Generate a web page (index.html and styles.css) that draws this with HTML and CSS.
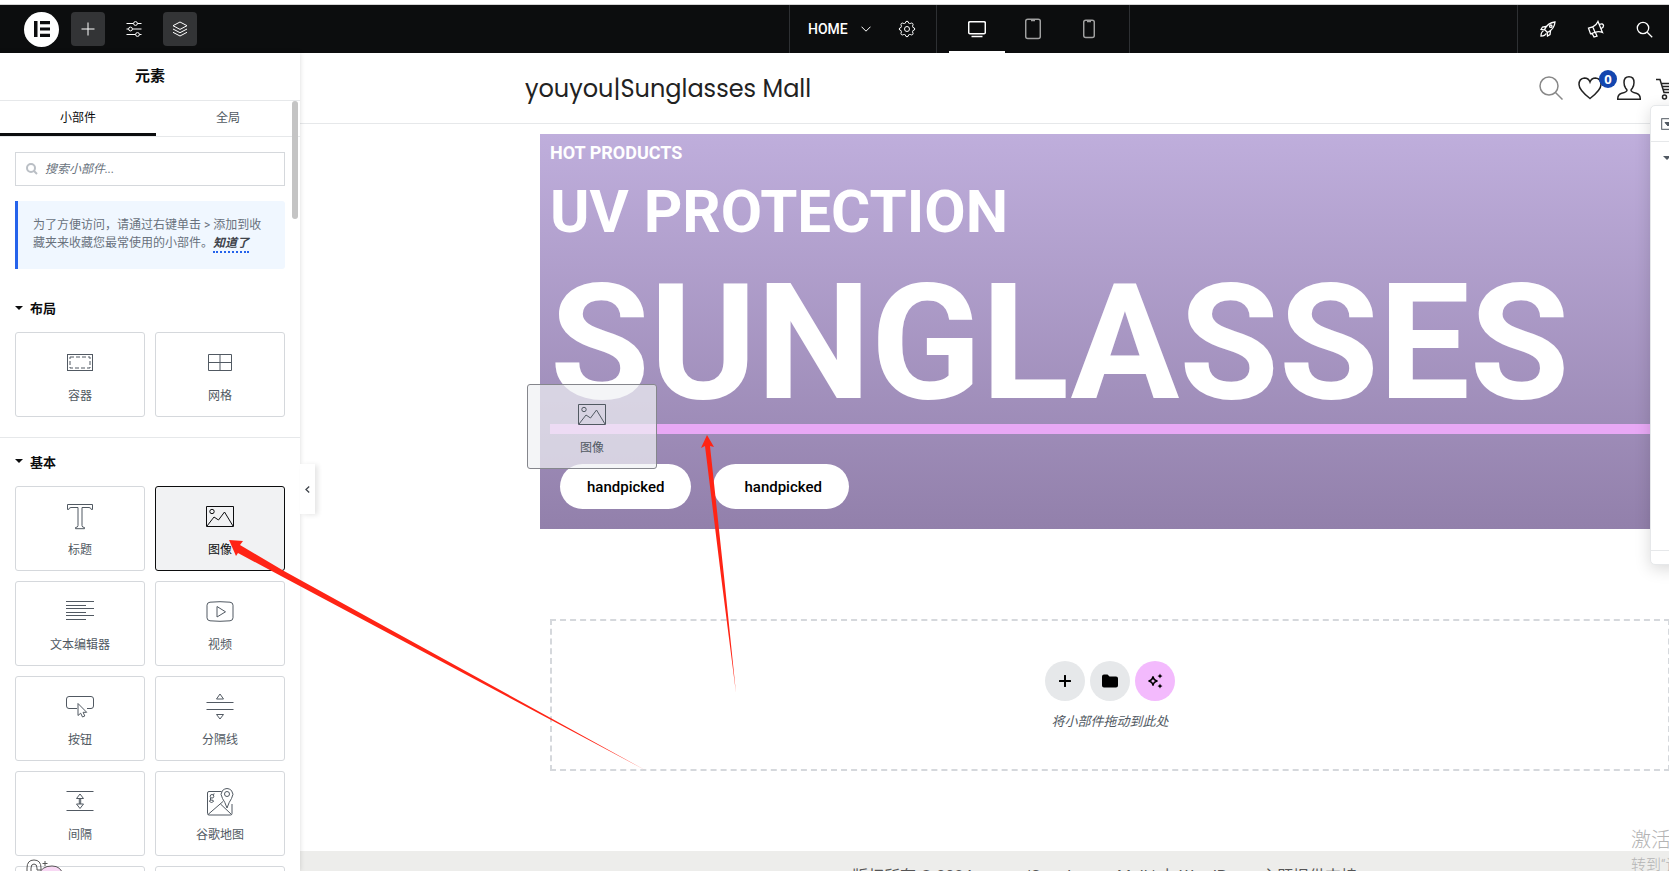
FILE: index.html
```html
<!DOCTYPE html>
<html lang="zh-CN">
<head>
  <meta charset="UTF-8" />
  <meta name="viewport" content="width=device-width, initial-scale=1.0" />
  <title>Elementor | HOME</title>
  <link rel="stylesheet" href="styles.css">
</head>
<body>
  <header class="topbar">
    <div class="bar-left">
      <button class="logo" aria-label="Elementor">
        <svg width="16" height="16" viewBox="0 0 16 16" fill="#0c0d0e"><path d="M0 0h3.500v16H0zM6 0h10v3.200H6zM6 6.400h10v3.200H6zM6 12.800h10v3.200H6z"/></svg>
      </button>
      <button class="tool on" aria-label="添加元素">
        <svg width="14" height="14" viewBox="0 0 14 14"><path d="M7 .5v13M.5 7h13"/></svg>
      </button>
      <button class="tool" aria-label="网站设置">
        <svg width="16" height="16" viewBox="0 0 16 16"><path d="M.5 2.500h7M11.500 2.500h4M.5 8h2M6.500 8h9M.5 13.500h9M13.500 13.500h2"/><circle cx="9.500" cy="2.500" r="1.900"/><circle cx="4.500" cy="8" r="1.900"/><circle cx="11.500" cy="13.500" r="1.900"/></svg>
      </button>
      <button class="tool on" aria-label="结构">
        <svg width="16" height="16" viewBox="0 0 16 16"><path d="M8 1l7 3.700-7 3.700-7-3.700zM1 8l7 3.700L15 8M1 11.300L8 15l7-3.700"/></svg>
      </button>
    </div>
    <div class="bar-center">
      <div class="doc">
        <button class="doc-name">HOME
          <svg width="10" height="6" viewBox="0 0 10 6"><path d="M.5.7L5 5.200 9.500.7"/></svg>
        </button>
        <button class="settings" aria-label="页面设置">
          <svg width="18" height="18" viewBox="0 0 18 18"><path d="M7.300 3.200Q7.600 1.200 9 1.200t1.700 2q.9.500 1.500.3 1.700-.9 2.500 0t-.1 2.500q0 .9.300 1.400 1.900.3 1.900 1.600t-1.900 1.600q-.4.600-.3 1.400.9 1.600.1 2.500t-2.500 0q-.8-.1-1.500.3-.3 2-1.700 2t-1.700-2q-.7-.5-1.500-.3-1.700.9-2.500 0t.1-2.500q0-.8-.3-1.400-1.900-.4-1.900-1.600t1.900-1.600q.3-.6.300-1.400-.9-1.600-.1-2.500t2.500 0q.8.200 1.500-.3z"/><circle cx="9" cy="9" r="2.500"/></svg>
        </button>
      </div>
      <div class="devices">
        <button class="device on" aria-label="桌面">
          <svg width="18" height="18" viewBox="0 0 18 18"><rect x=".7" y="1.700" width="16.600" height="12" rx="1.200"/><path d="M3.500 16.500h11"/></svg>
        </button>
        <button class="device" aria-label="平板">
          <svg width="16" height="22" viewBox="0 0 16 22"><rect x=".7" y="1.200" width="14.600" height="19.400" rx="2"/><path d="M6 2.500h4"/></svg>
        </button>
        <button class="device" aria-label="手机">
          <svg width="12" height="20" viewBox="0 0 12 20"><rect x=".7" y="1.200" width="10.600" height="17.400" rx="2"/><path d="M4 2.500h4"/></svg>
        </button>
      </div>
    </div>
    <div class="bar-right">
      <div class="actions">
        <button aria-label="新功能">
          <svg width="16" height="16" viewBox="0 0 16 16"><path d="M4.500 8.500Q8 1.500 15 1q-.5 7-7.500 10.500zM6 5.500L2.500 6 1 8.500l3.500.3M10.500 10L10 13.500 7.500 15l-.3-3.500M3.500 10Q1 11 1 15q4 0 5-2.500M4.500 8.500l3 3"/><circle cx="10.800" cy="5.200" r="1.200"/></svg>
        </button>
        <button aria-label="公告">
          <svg width="18" height="18" viewBox="0 0 18 18"><path d="M1.500 8.200L5.800 6.800 8 12.300l-4.500 1.500zM5.800 6.800Q9.500 5 11 1.500L15.500 12.500Q12 11 8 12.300M5 13.300l2 3.700 3-1-1.700-3.700M12.500 4.500q3.500-1.500 4 1 .2 2-2.200 3"/></svg>
        </button>
        <button aria-label="查找">
          <svg width="17" height="17" viewBox="0 0 17 17"><circle cx="7" cy="7" r="5.700"/><path d="M11.200 11.200l5 5"/></svg>
        </button>
      </div>
    </div>
  </header>

  <div class="workspace">
    <aside class="panel">
      <h1 class="panel-title">元素</h1>
      <nav class="tabs">
        <button class="tab active">小部件</button>
        <button class="tab">全局</button>
      </nav>
      <div class="scrollbar"></div>
      <div class="panel-top">
        <label class="search">
          <svg width="12" height="12" viewBox="0 0 12 12"><circle cx="5" cy="5" r="4"/><path d="M8 8l3 3"/></svg>
          <input type="text" placeholder="搜索小部件..." aria-label="搜索小部件">
        </label>
        <div class="notice">为了方便访问，请通过右键单击 &gt; 添加到收藏夹来收藏您最常使用的小部件。<a href="#">知道了</a></div>
      </div>

      <section class="category">
        <button class="cat-title"><i class="caret"></i>布局</button>
        <div class="widgets">
          <button class="widget">
            <svg width="28" height="28" viewBox="0 0 28 28"><rect x="1.500" y="5.500" width="25" height="16"/><rect x="4" y="8" width="20" height="11" stroke-dasharray="4 2"/></svg>
            <span>容器</span>
          </button>
          <button class="widget">
            <svg width="28" height="28" viewBox="0 0 28 28"><path d="M2.500 5.500h23v16h-23zM14 5.500v16M2.500 13.500h23"/></svg>
            <span>网格</span>
          </button>
        </div>
      </section>

      <section class="category">
        <button class="cat-title"><i class="caret"></i>基本</button>
        <div class="widgets">
          <button class="widget">
            <svg width="28" height="28" viewBox="0 0 28 28"><path d="M1.500 1.500h25v5h-1.200q-.3-2-2.300-2h-7v18q0 2 2.500 2v1.200h-9v-1.200q2.500 0 2.500-2v-18H5q-2 0-2.300 2H1.500z"/></svg>
            <span>标题</span>
          </button>
          <button class="widget selected">
            <svg width="28" height="28" viewBox="0 0 28 28"><path d="M.5 3.500h27v20H.5zM1 23l7-9 4.500 3L18.500 9l8.500 14"/><circle cx="6" cy="8.500" r="2.200"/></svg>
            <span>图像</span>
          </button>
          <button class="widget">
            <svg width="28" height="28" viewBox="0 0 28 28"><path d="M0 3.500h28M0 7.500h20M0 10.500h28M0 14.500h20M0 17.500h28M0 21.500h20"/></svg>
            <span>文本编辑器</span>
          </button>
          <button class="widget">
            <svg width="28" height="28" viewBox="0 0 28 28"><path d="M4 4.200q10-1 20 0 3 .3 3 3v12.600q0 2.700-3 3-10 1-20 0-3-.3-3-3V7.200q0-2.700 3-3zM11 8.500v10.500l8.500-5.200z"/></svg>
            <span>视频</span>
          </button>
          <button class="widget">
            <svg width="28" height="28" viewBox="0 0 28 28"><path d="M11 15.500H3q-2.500 0-2.500-2.500V6Q.5 3.500 3 3.500h22q2.500 0 2.500 2.500v7q0 2.500-2.500 2.500h-4"/><path d="M12 10.500v12l2.700-2.300 1.800 3.800 2.300-1-1.700-3.700h3.600z"/></svg>
            <span>按钮</span>
          </button>
          <button class="widget">
            <svg width="28" height="28" viewBox="0 0 28 28"><path d="M.5 9.500h27M.5 16.500h27M14 1l3.500 5h-7zM14 26l3.500-4.500h-7z"/></svg>
            <span>分隔线</span>
          </button>
          <button class="widget">
            <svg width="28" height="28" viewBox="0 0 28 28"><path d="M.5 3.500h27M.5 22.500h27M14 6l3.500 4.500h-7zM14 20.500l3.500-4.500h-7zM13.300 10.500V16M14.700 10.500V16"/></svg>
            <span>间隔</span>
          </button>
          <button class="widget">
            <svg width="28" height="28" viewBox="0 0 28 28"><path d="M15.500 3.500H3Q1.500 3.500 1.500 5v20.500q0 1.500 1.500 1.500h21.500q1.500 0 1.500-1.500V16M2 26.500L17 13.500M14.500 16l11 10.500M21 20Q19 14 16.500 10.500q-3-4.500 0-8 4.500-4 9 0 3 3.500 0 8Q23 14 21 20z"/><circle cx="21" cy="6" r="2.500"/><circle cx="6" cy="8.300" r="1.800"/><path d="M7 6.500l1.500-.7M5 10q-2 1 0 2 3 0 2.500 1.500-2 2-4 0-.5-1 1.500-1.500"/></svg>
            <span>谷歌地图</span>
          </button>
          <button class="widget" aria-label="图像框"></button>
          <button class="widget" aria-label="图标"></button>
        </div>
      </section>
      <button class="collapse" aria-label="收起面板">
        <svg width="5" height="7" viewBox="0 0 5 7"><path d="M4.200.5L1 3.500l3.200 3"/></svg>
      </button>
      <svg class="mascot" width="44" height="16" viewBox="0 0 44 16"><path class="blob" d="M14 16q2-9 13-9 9 0 11 9z"/><path d="M2 16V9q0-8 7-8t7 8v2h-4V9q0-4-3-4T6 9v7M20 2v5M17.500 4.500h5"/></svg>
    </aside>

    <main class="canvas">
      <div class="site-header">
        <a class="site-title" href="#">youyou|Sunglasses Mall</a>
        <div class="site-icons">
          <a href="#" class="s-search" aria-label="搜索"><svg width="24" height="24" viewBox="0 0 24 24"><circle cx="10" cy="10" r="9"/><path d="M16.500 16.500l7 7"/></svg></a>
          <a href="#" class="s-heart" aria-label="收藏"><svg width="24" height="24" viewBox="0 0 24 24"><path d="M12 22.500Q1 14 1 8.500 1 2.500 6.500 2 10.500 2 12 6q1.500-4 5.500-4 5.500.5 5.500 6.500 0 5.500-11 14z"/></svg><b class="badge">0</b></a>
          <a href="#" aria-label="账户"><svg width="24" height="24" viewBox="0 0 24 24"><path d="M.7 23.300q0-5 4-6 5.300-1.300 5.300-3 0-1-1.300-2Q7 10 7 6.500 7 .8 12 .8t5 5.700q0 3.500-1.700 5.800-1.300 1-1.300 2 0 1.700 5.300 3 4 1 4 6z"/></svg></a>
          <a href="#" class="s-cart" aria-label="购物车"><svg width="24" height="24" viewBox="0 0 24 24"><path d="M0 3.500h4l4 13h14M5 7.500h18l-2 6H7M5.500 10.500H22"/><circle cx="8.500" cy="21" r="2"/><circle cx="19.500" cy="21" r="2"/></svg></a>
        </div>
      </div>

      <section class="hero">
        <h4>HOT PRODUCTS</h4>
        <h2>UV PROTECTION</h2>
        <h1>SUNGLASSES</h1>
        <div class="drop-line"></div>
        <div class="hero-buttons">
          <button class="pill">handpicked</button>
          <button class="pill wide">handpicked</button>
        </div>
        <div class="ghost">
          <svg width="28" height="28" viewBox="0 0 28 28"><path d="M.5 3.500h27v20H.5zM1 23l7-9 4.500 3L18.500 9l8.500 14"/><circle cx="6" cy="8.500" r="2.200"/></svg>
          <span>图像</span>
        </div>
      </section>

      <section class="add-section">
        <div class="add-buttons">
          <button aria-label="添加新容器"><svg width="12" height="12" viewBox="0 0 12 12"><path d="M6 .8v10.400M.8 6h10.400" stroke="#000" stroke-width="2" stroke-linecap="round"/></svg></button>
          <button aria-label="添加模板"><svg width="16" height="14" viewBox="0 0 16 14"><path d="M0 2.500Q0 .5 2 .5h3.500l2 2H14q2 0 2 2V11.500q0 2-2 2H2q-2 0-2-2z"/></svg></button>
          <button class="ai" aria-label="AI"><svg width="16" height="16" viewBox="0 0 16 16"><path d="M6 3.500q.7 4 4.500 4.500Q6.700 8.500 6 12.500 5.300 8.500 1.500 8 5.300 7.500 6 3.500z" fill="none" stroke="#000" stroke-width="1.500"/><path d="M13 .5q.3 2 2.500 2.500-2.200.5-2.500 2.500-.3-2-2.500-2.500 2.200-.5 2.500-2.500zM13 10.500q.3 2 2.500 2.500-2.200.5-2.500 2.500-.3-2-2.500-2.500 2.200-.5 2.500-2.500z"/></svg></button>
        </div>
        <p>将小部件拖动到此处</p>
      </section>

      <footer class="site-footer">版权所有 © 2024 youyou|Sunglasses Mall | 由 WordPress 主题提供支持</footer>

      <aside class="navigator">
        <div class="nav-head"><svg width="14" height="12" viewBox="0 0 14 12"><rect x=".7" y=".7" width="12.600" height="10.600"/><path d="M4 4.500h6L7 8z"/></svg></div>
        <div class="nav-body"><i class="caret"></i></div>
        <div class="nav-foot"></div>
      </aside>
    </main>
  </div>

  <div class="watermark">
    <div class="wm-title">激活 Windows</div>
    <div>转到“设置”以激活 Windows。</div>
  </div>

  <svg class="arrows" width="760" height="780" viewBox="0 0 760 780">
    <path d="M229 540l14 1-3 4 44 26 361 199-364-194-43-23-2 3z"/>
    <path d="M707 435l7 12-4-1 14 130 12 117-15-117-16-130-4 2z"/>
  </svg>
</body>
</html>
```
FILE: styles.css
```css
* {
  box-sizing: border-box;
}
html, body {
  margin: 0;
  padding: 0;
}
body {
  height: 100vh;
  display: flex;
  flex-direction: column;
  position: relative;
  overflow: hidden;
  background: #fff;
  color: #0c0d0e;
  font-family: Roboto, "Noto Sans CJK SC", sans-serif;
  font-size: 12px;
}
button {
  margin: 0;
  padding: 0;
  border: 0;
  background: none;
  font-family: inherit;
  font-size: 12px;
  color: inherit;
  cursor: pointer;
}
svg {
  display: block;
  flex: none;
  fill: none;
  stroke: currentColor;
}

/* top bar */
.topbar {
  display: flex;
  flex: none;
  height: 49px;
  margin-top: 4px;
  border-top: 1px solid #d5d5d5;
  background: #0c0d0e;
  color: #fff;
}
.bar-left {
  flex: 79;
  display: flex;
  align-items: center;
  gap: 12px;
}
.logo {
  width: 35px;
  height: 35px;
  margin-left: 24px;
  border-radius: 50%;
  background: #fff;
}
.logo svg {
  margin: 0 auto;
  fill: #0c0d0e;
  stroke: none;
}
.tool {
  display: flex;
  align-items: center;
  justify-content: center;
  width: 34px;
  height: 34px;
  border-radius: 4px;
}
.tool.on {
  background: #333436;
}
.bar-center {
  display: flex;
  border: solid #2e3033;
  border-width: 0 1px;
}
.doc {
  display: flex;
  align-items: center;
  gap: 27px;
  padding: 0 20px 0 18px;
  border-right: 1px solid #2e3033;
}
.doc-name {
  display: flex;
  align-items: center;
  gap: 13px;
  font-size: 14px;
  font-weight: 500;
}
.devices {
  display: flex;
  padding: 0 12px;
}
.device {
  display: flex;
  align-items: center;
  justify-content: center;
  width: 56px;
  border: solid transparent;
  border-width: 2px 0;
  color: #a0a0a0;
}
.device.on {
  border-bottom-color: #fff;
  color: #fff;
}
.device svg {
  stroke-width: 1.5;
}
.bar-right {
  flex: 54;
  display: flex;
  justify-content: flex-end;
}
.actions {
  display: flex;
  padding: 0 1px 0 6px;
  border-left: 1px solid #2e3033;
}
.actions button {
  display: flex;
  align-items: center;
  justify-content: center;
  width: 48px;
}
.actions svg {
  stroke-width: 1.3;
}

/* left panel */
.workspace {
  display: flex;
  flex: 1;
  min-height: 0;
}
.panel {
  position: relative;
  z-index: 2;
  flex: none;
  width: 300px;
  background: #fff;
  box-shadow: 0 0 5px rgba(0, 0, 0, 0.15);
}
.panel-title {
  margin: 0;
  height: 48px;
  border-bottom: 1px solid #e6e8ea;
  font-size: 15px;
  font-weight: 700;
  line-height: 47px;
  text-align: center;
}
.tabs {
  display: flex;
  height: 36px;
  border-bottom: 1px solid #e6e8ea;
}
.tab {
  flex: 12;
  padding-bottom: 5px;
  color: #515962;
}
.tab.active {
  flex: 13;
  padding-bottom: 2px;
  border-bottom: 3px solid #0c0d0e;
  color: #0c0d0e;
}
.scrollbar {
  position: absolute;
  top: 48px;
  right: 2px;
  width: 6px;
  height: 118px;
  border-radius: 3px;
  background: #c4c4c4;
}
.panel-top {
  padding: 15px 15px 20px;
}
.search {
  display: flex;
  align-items: center;
  gap: 7px;
  height: 34px;
  padding: 0 10px;
  border: 1px solid #d5d8dc;
  color: #babfc5;
}
.search svg {
  stroke-width: 2;
}
.search input {
  flex: 1;
  min-width: 0;
  padding: 0;
  border: 0;
  outline: 0;
  font-family: inherit;
  font-size: 12px;
  font-style: italic;
}
.search input::placeholder {
  color: #69727d;
}
.notice {
  margin-top: 15px;
  padding: 15px;
  border-left: 3px solid #2563eb;
  border-radius: 0 3px 3px 0;
  background: #f0f7ff;
  color: #69727d;
  line-height: 18px;
  height: 68px;
}
.notice a {
  padding-bottom: 1px;
  border-bottom: 2px dotted #2563eb;
  color: #3f444b;
  font-style: italic;
  font-weight: 700;
  text-decoration: none;
}
.category {
  padding: 0 15px 20px;
  border-bottom: 1px solid #e6e8ea;
}
.cat-title {
  display: flex;
  align-items: center;
  gap: 7px;
  width: 100%;
  height: 48px;
  padding-bottom: 2px;
  font-size: 13px;
  font-weight: 700;
}
.panel-top + .category .cat-title {
  height: 43px;
  padding-bottom: 6px;
}
.caret {
  width: 8px;
  border: solid transparent;
  border-width: 4px 4px 0;
  border-top-color: currentColor;
}
.widgets {
  display: grid;
  grid-template-columns: 1fr 1fr;
  gap: 10px;
}
.widget, .ghost {
  display: flex;
  flex-direction: column;
  align-items: center;
  gap: 10px;
  height: 85px;
  padding-top: 16px;
  border: 1px solid #d5d8dc;
  border-radius: 3px;
  color: #515962;
  font-size: 12px;
  line-height: 18px;
}
.widget.selected {
  border-color: #0c0d0e;
  background: #f1f2f3;
  color: #0c0d0e;
}
.collapse {
  position: absolute;
  top: 411px;
  left: 300px;
  display: flex;
  align-items: center;
  justify-content: center;
  width: 15px;
  height: 50px;
  background: #fff;
  box-shadow: 3px 1px 5px rgba(0, 0, 0, 0.1);
  color: #3f444b;
}
.collapse svg {
  stroke-width: 1.3;
}
.mascot {
  position: absolute;
  left: 25px;
  bottom: -4px;
  color: #555;
}
.mascot .blob {
  fill: #f8d8f4;
}

/* page preview */
.canvas {
  position: relative;
  display: flex;
  flex-direction: column;
  flex: 1;
  min-width: 0;
}
.site-header {
  display: flex;
  flex: none;
  align-items: center;
  justify-content: space-between;
  height: 71px;
  padding-left: 225px;
  border-bottom: 1px solid #e6e8ea;
}
.site-title {
  color: #222;
  font-family: Poppins, Inter, sans-serif;
  font-size: 24px;
  text-decoration: none;
}
.site-icons {
  display: flex;
  gap: 15px;
  margin-right: -11px;
}
.site-icons a {
  position: relative;
  color: #222;
}
.site-icons .s-search {
  color: #888;
}
.site-icons svg {
  stroke-width: 1.5;
}
.badge {
  position: absolute;
  top: -6px;
  right: -15px;
  width: 18px;
  height: 18px;
  border-radius: 50%;
  background: #1346af;
  color: #fff;
  font-family: "Open Sans", sans-serif;
  font-size: 13px;
  line-height: 18px;
  text-align: center;
}
.hero {
  position: relative;
  flex: none;
  height: 395px;
  margin: 10px -11px 0 240px;
  padding: 10px;
  background: linear-gradient(#bfaedc, #9280ab);
  color: #fff;
}
.hero h1, .hero h2, .hero h4 {
  margin: 0;
  font-weight: 700;
  white-space: nowrap;
}
.hero h4 {
  font-size: 18px;
  line-height: 18px;
}
.hero h2 {
  margin-top: 20px;
  font-size: 60px;
  line-height: 60px;
}
.hero h1 {
  margin-top: 20px;
  font-size: 162px;
  line-height: 162px;
}
.drop-line {
  height: 10px;
  margin-right: -10px;
  background: #e8a8f5;
}
.hero-buttons {
  display: flex;
  gap: 22px;
  padding: 30px 10px 0;
}
.pill {
  height: 45px;
  padding: 0 27px;
  border-radius: 23px;
  background: #fff;
  color: #000;
  font-size: 15px;
  font-weight: 500;
}
.pill.wide {
  padding-left: 31px;
}
.ghost {
  position: absolute;
  top: 250px;
  left: -13px;
  width: 130px;
  border-color: #85868c;
  background: rgba(240, 241, 244, 0.7);
}
.add-section {
  flex: none;
  height: 152px;
  margin: 90px -1px 0 250px;
  padding-top: 40px;
  border: 2px dashed #d5d8dc;
}
.add-buttons {
  display: flex;
  justify-content: center;
  gap: 5px;
}
.add-buttons button {
  display: flex;
  align-items: center;
  justify-content: center;
  width: 40px;
  height: 40px;
  border-radius: 50%;
  background: #e6e8ea;
}
.add-buttons .ai {
  background: #f3bafd;
}
.add-buttons svg {
  fill: #000;
  stroke: none;
}
.add-section p {
  margin: 11px 0 0;
  color: #515962;
  font-size: 13px;
  font-style: italic;
  line-height: 20px;
  text-align: center;
}
.site-footer {
  flex: 1 0 20px;
  margin-top: 80px;
  padding: 16px 0 0 240px;
  background: #ededeb;
  color: #555;
  font-size: 16px;
  line-height: 20px;
  text-align: center;
}
.navigator {
  position: absolute;
  top: 52px;
  right: -221px;
  display: flex;
  flex-direction: column;
  width: 240px;
  height: 460px;
  border: 1px solid #e6e8ea;
  border-radius: 5px;
  background: #fff;
  box-shadow: 0 4px 16px rgba(0, 0, 0, 0.15);
  color: #515962;
}
.nav-head {
  height: 36px;
  padding: 12px 10px;
  border-bottom: 1px solid #e6e8ea;
}
.nav-head path {
  fill: currentColor;
}
.nav-body {
  flex: 1;
  padding: 14px 12px;
}
.nav-body .caret {
  display: block;
}
.nav-foot {
  height: 14px;
  border-top: 1px solid #e6e8ea;
}

/* system notice in the corner */
.watermark {
  position: absolute;
  top: 826px;
  left: 1631px;
  color: #b4b4b4;
  font-family: Roboto, "Noto Sans CJK SC", sans-serif;
  font-size: 15px;
  font-weight: 300;
  line-height: 22px;
  white-space: nowrap;
  z-index: 3;
}
.wm-title {
  font-size: 20px;
  line-height: 28px;
}

.arrows {
  position: absolute;
  top: 0;
  left: 0;
  z-index: 4;
  fill: #ff2415;
  stroke: none;
  pointer-events: none;
}
```
